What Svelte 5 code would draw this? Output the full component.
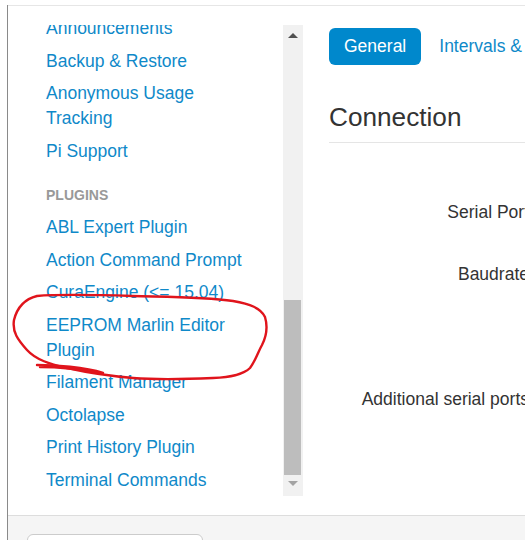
<script lang="ts">
  const system = ['Announcements', 'Backup & Restore', 'Anonymous Usage Tracking', 'Pi Support'];
  const plugins = [
    'ABL Expert Plugin',
    'Action Command Prompt',
    'CuraEngine (<= 15.04)',
    'EEPROM Marlin Editor Plugin',
    'Filament Manager',
    'Octolapse',
    'Print History Plugin',
    'Terminal Commands'
  ];
  const fields = [
    { label: 'Serial Port', gap: 'a' },
    { label: 'Baudrate', gap: 'b' },
    { label: 'Additional serial ports', gap: 'c' }
  ];
</script>

<div class="window">
  <div class="frame">
    <div class="body">
      <aside class="side">
        <nav class="nav">
          <ul>
            {#each system as name}
              <li><a href="#top">{name}</a></li>
            {/each}
            <li class="header">PLUGINS</li>
            {#each plugins as name}
              <li><a href="#top">{name}</a></li>
            {/each}
          </ul>
        </nav>
        <div class="scrollbar" aria-hidden="true">
          <span class="arrow up"></span>
          <span class="track"><span class="thumb"></span></span>
          <span class="arrow down"></span>
        </div>
      </aside>

      <main class="content">
        <div class="tabs">
          <a class="tab on" href="#top">General</a>
          <a class="tab" href="#top">Intervals &amp; Timeouts</a>
        </div>
        <h3>Connection</h3>
        <div class="form">
          {#each fields as f}
            <div class="row {f.gap}"><label for="x">{f.label}</label></div>
          {/each}
        </div>
      </main>
    </div>

    <footer class="foot">
      <button type="button" class="btn"></button>
    </footer>
  </div>

  <svg class="scribble" width="525" height="540" viewBox="0 0 525 540" aria-hidden="true">
    <path d="M37 296C25 299 17 308 14 320C12 332 18 340 27 350C36 360 50 364 67 368C85 372 110 376 133 378C160 380 190 379 213 378C230 377 243 375 250 368C256 360 258 352 262 345C266 337 268 327 265 317C261 308 250 304 233 301C205 297 170 297 133 296C100 295 60 294 37 296Z" />
    <path d="M37 365C55 365 85 367 103 373C85 370 60 367 40 367" />
  </svg>
</div>

<style>
  :global(body) {
    margin: 0;
    overflow: hidden;
    background: #fff;
  }

  .window {
    position: relative;
    width: 525px;
    height: 540px;
    overflow: hidden;
    box-sizing: border-box;
    padding: 5px 0 0 7px;
    font-family: 'Liberation Sans', Arial, sans-serif;
    font-size: 17.5px;
    line-height: 25px;
    color: #333;
  }

  .frame {
    width: 700px;
    height: 535px;
    border-left: 1px solid #8a8a8a;
  }

  .body {
    display: flex;
    height: 511px;
    box-sizing: border-box;
    border-top: 1px solid #e6e6e6;
    border-bottom: 1px solid #ddd;
    padding-top: 19px;
  }

  .side {
    display: flex;
    flex: none;
    width: 295px;
    height: 471px;
  }

  .nav {
    flex: 1;
    overflow: hidden;
  }

  ul {
    list-style: none;
    margin: -12.75px 0 0;
    padding: 0 0 0 38px;
  }

  li {
    padding: 3.75px 0;
    width: 205px;
  }

  li.header {
    margin-top: 12px;
    padding-bottom: 3.5px;
    font-size: 14px;
    font-weight: bold;
    color: #999;
  }

  a {
    color: #0f89c9;
    text-decoration: none;
  }

  .scrollbar {
    display: flex;
    flex: none;
    flex-direction: column;
    align-items: center;
    width: 20px;
    background: #f1f1f1;
  }

  .arrow {
    flex: none;
    width: 0;
    height: 0;
    border-left: 5px solid transparent;
    border-right: 5px solid transparent;
  }

  .arrow.up {
    margin: 8px 0 6px;
    border-bottom: 5px solid #505050;
  }

  .arrow.down {
    margin: 6px 0 10px;
    border-top: 5px solid #a3a3a3;
  }

  .track {
    flex: 1;
    display: flex;
    flex-direction: column;
    justify-content: flex-end;
    width: 17px;
    margin-right: 2px;
  }

  .thumb {
    display: block;
    height: 175px;
    background: #bdbdbd;
  }

  .content {
    flex: 1;
    margin-left: 26px;
    margin-top: 3px;
  }

  .tabs {
    display: flex;
    align-items: center;
    gap: 18px;
    white-space: nowrap;
  }

  .tab {
    padding: 6px 0;
  }

  .tab.on {
    padding: 6px 15px;
    border-radius: 6px;
    background: #0088cc;
    color: #fff;
  }

  h3 {
    margin: 37px 0 0;
    padding-bottom: 10px;
    border-bottom: 1px solid #e5e5e5;
    font-size: 26.2px;
    font-weight: normal;
    line-height: 30px;
    color: #333;
  }

  .form {
    display: flex;
    flex-direction: column;
  }

  .row {
    width: 200px;
    text-align: right;
    white-space: nowrap;
  }

  .row label {
    display: block;
  }

  .row.a { padding-top: 57px; }
  .row.b { padding-top: 37px; }
  .row.c { padding-top: 100px; }

  .foot {
    height: 24px;
    box-sizing: border-box;
    padding: 18px 0 0 19px;
    background: #f5f5f5;
  }

  .btn {
    display: block;
    width: 176px;
    height: 30px;
    padding: 0;
    border: 1px solid #ccc;
    border-radius: 6px;
    background: #fff;
  }

  .scribble {
    position: absolute;
    left: 0;
    top: 0;
    pointer-events: none;
  }

  .scribble path {
    fill: none;
    stroke: #e0141c;
    stroke-width: 2.4;
    stroke-linejoin: round;
    stroke-linecap: round;
  }
</style>
